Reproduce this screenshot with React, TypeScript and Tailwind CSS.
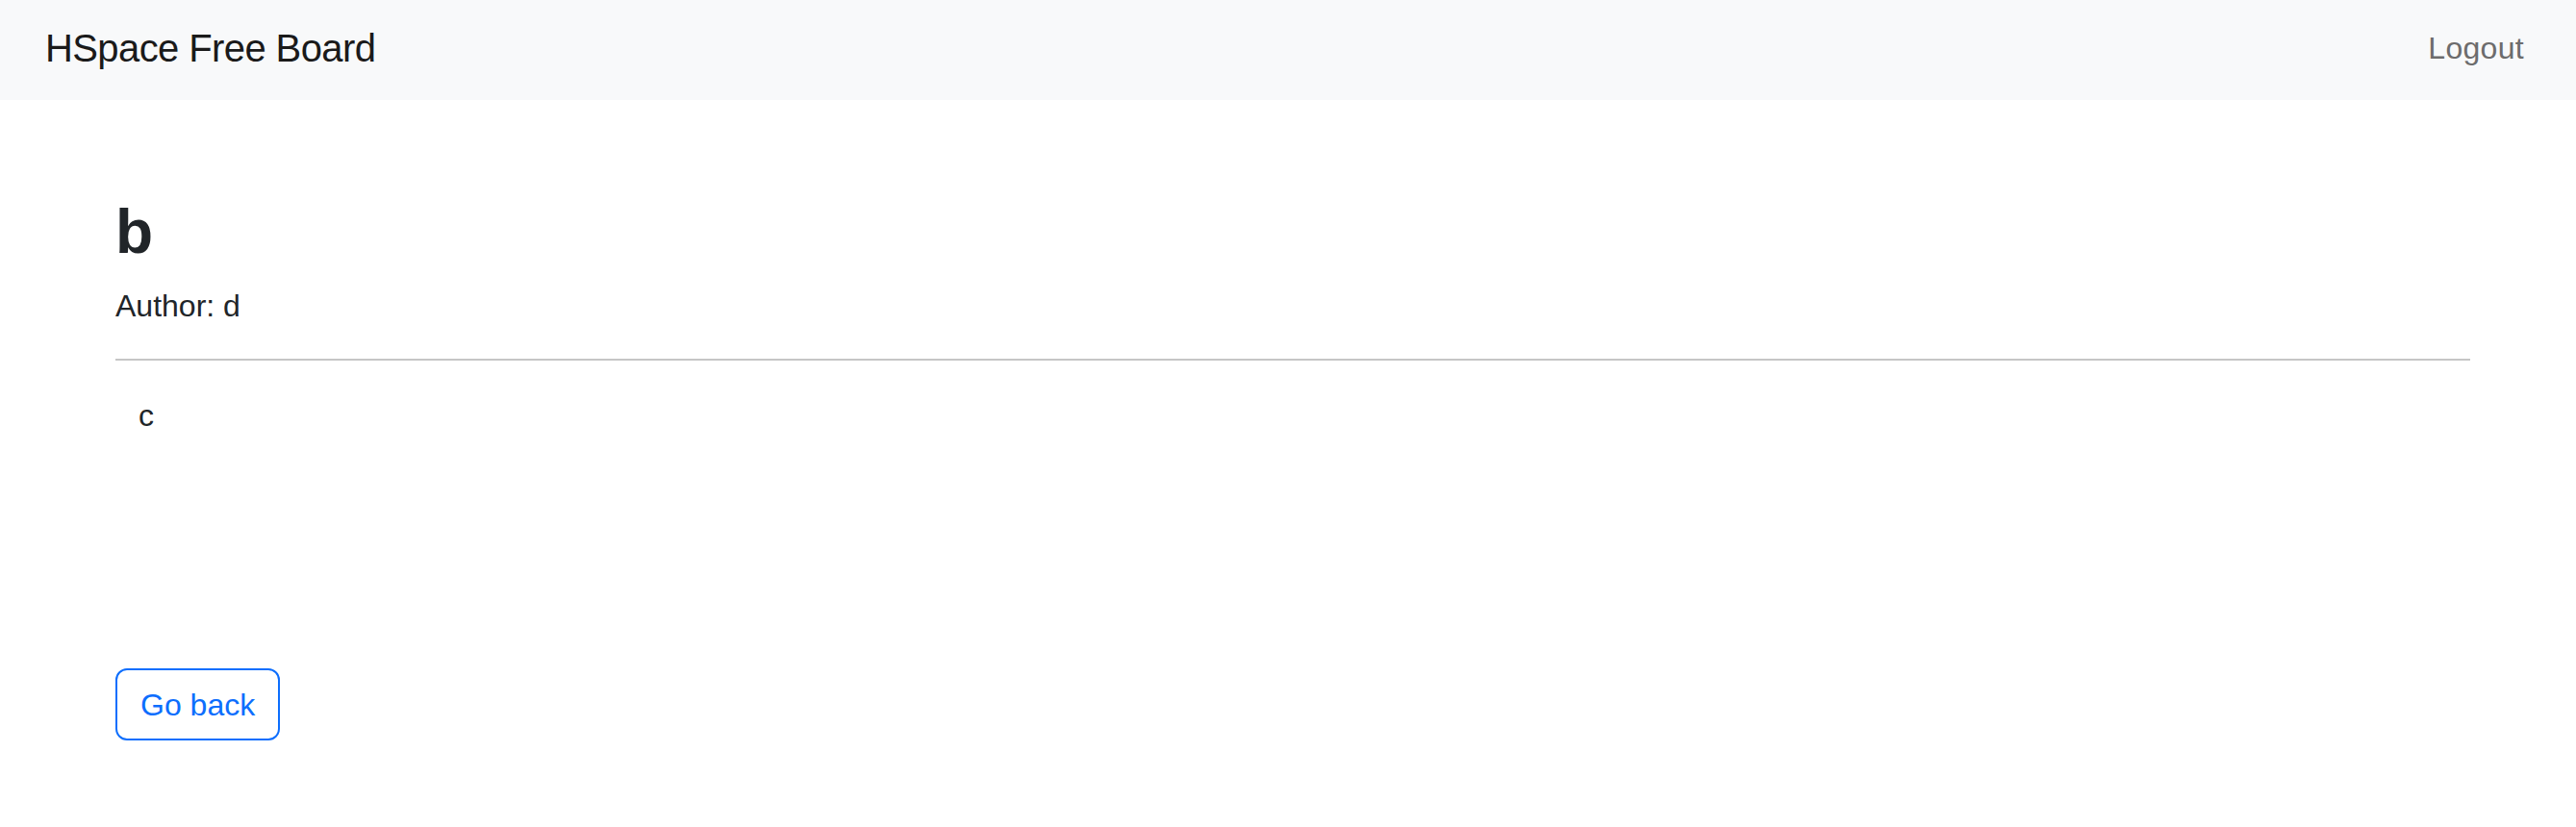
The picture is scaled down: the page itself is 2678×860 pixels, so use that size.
export default function App() {
  return (
    <div className="min-h-[860px] bg-white font-['Liberation_Sans',Arial,sans-serif]">
      <nav className="h-[104px] bg-[#f8f9fa] flex items-center justify-between pl-[47px] pr-[54px] pb-[5px]">
        <a className="text-[40px] leading-[60px] text-[#1a1a1a] tracking-[-0.6px]" href="#">
          HSpace Free Board
        </a>
        <a className="text-[32px] leading-[48px] text-[#6c6c6c] tracking-[0.3px]" href="#">
          Logout
        </a>
      </nav>
      <main className="pl-[120px] pr-[110px] pt-[99px]">
        <h2 className="text-[64px] leading-[76px] font-bold text-[#212529]">b</h2>
        <p className="mt-[15px] text-[32px] leading-[48px] text-[#212529]">Author: d</p>
        <hr className="mt-[31px] border-0 border-t-2 border-[#c6c6c6]" />
        <div className="mt-[33px] pl-[24px] text-[32px] leading-[48px] text-[#212529] min-h-[287px]">
          c
        </div>
        <button className="h-[75px] px-[24px] flex items-center justify-center border-2 border-[#0d6efd] rounded-[12px] text-[32px] leading-[48px] text-[#0d6efd] bg-white">
          Go back
        </button>
      </main>
    </div>
  );
}
